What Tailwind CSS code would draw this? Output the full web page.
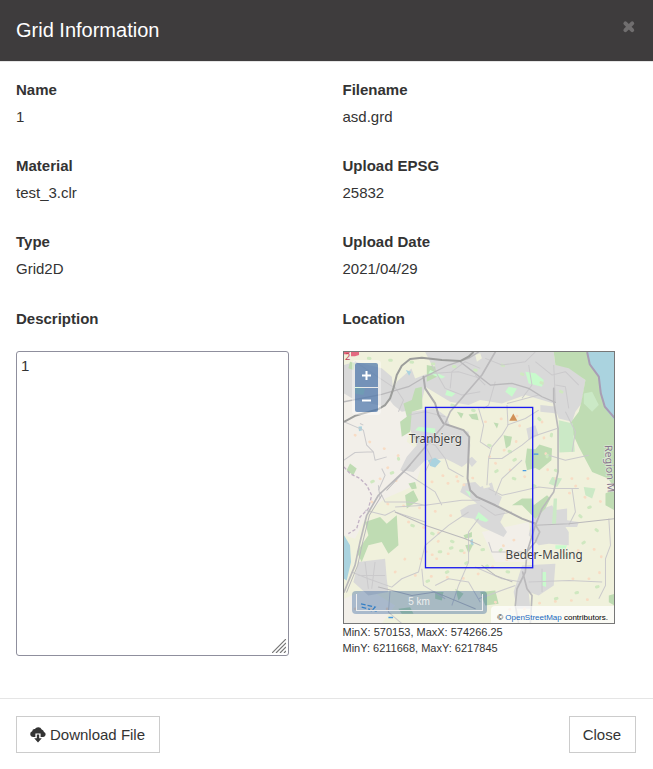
<!DOCTYPE html>
<html lang="en">
<head>
  <meta charset="UTF-8" />
  <meta name="viewport" content="width=device-width, initial-scale=1.0" />
  <title>Grid Information</title>
  <script src="https://cdn.jsdelivr.net/npm/@tailwindcss/browser@4"></script>
</head>
<body class="bg-white text-[#333] text-[15px] leading-[22px] font-['Liberation_Sans',Arial,sans-serif]">

  <!-- Header -->
  <header class="flex items-start justify-between bg-[#3e3c3d] border-b border-[#e5e5e5] px-4 pt-4 pb-[17px]">
    <h1 class="text-white text-xl leading-7">Grid Information</h1>
    <button type="button" aria-label="Close dialog" class="mt-[3px] text-[#706e6f]">
      <svg class="size-4" viewBox="0 0 16 16" fill="none" stroke="currentColor" stroke-width="4" stroke-linecap="round"><path d="M4.4 4.4l6.8 6.8M11.2 4.4l-6.8 6.8" /></svg>
    </button>
  </header>

  <!-- Body -->
  <main class="grid grid-cols-2 gap-y-[27px] pt-[17px] pb-[42px]">
    <div class="px-4">
      <h2 class="font-bold mb-[5px]">Name</h2>
      <p>1</p>
    </div>
    <div class="px-4">
      <h2 class="font-bold mb-[5px]">Filename</h2>
      <p>asd.grd</p>
    </div>
    <div class="px-4">
      <h2 class="font-bold mb-[5px]">Material</h2>
      <p>test_3.clr</p>
    </div>
    <div class="px-4">
      <h2 class="font-bold mb-[5px]">Upload EPSG</h2>
      <p>25832</p>
    </div>
    <div class="px-4">
      <h2 class="font-bold mb-[5px]">Type</h2>
      <p>Grid2D</p>
    </div>
    <div class="px-4">
      <h2 class="font-bold mb-[5px]">Upload Date</h2>
      <p>2021/04/29</p>
    </div>
    <div class="pt-px pl-4 pr-[38px]">
      <label for="description" class="block font-bold mb-[21px]">Description</label>
      <div class="relative">
        <textarea id="description" class="block w-full h-[305px] resize-none rounded-[3px] border border-[#8f8f9d] bg-white px-1 py-[3px]">1</textarea>
        <svg class="pointer-events-none absolute bottom-[3px] right-[3px] size-[14px]" viewBox="0 0 14 14" stroke="#777" stroke-width="1.2"><path d="M0 14L14 0M4 14L14 4M8 14L14 8M12 14L14 12" /></svg>
      </div>
    </div>
    <div class="pt-px pl-4 pr-[38px]">
      <h2 class="font-bold mb-[21px]">Location</h2>

      <!-- Map -->
      <div class="relative aspect-square overflow-hidden border border-[#777]">
        <svg class="block size-full" viewBox="27 21 810 810" preserveAspectRatio="xMidYMid slice" role="img" aria-label="Map of Tranbjerg and Beder-Malling">
          <rect x="27" y="21" width="810" height="813" fill="#f0f1dc" />
          <path fill="#f2efe9" d="M27 120L180 130 235 205 215 290 270 330 240 420 150 460 100 500 60 580 27 570ZM440 560L580 530 590 650 480 650ZM27 760L100 730 180 780 140 834 27 834Z" />

          <!-- Towns -->
          <g fill="#d9d9d9">
            <path d="M27 60L60 50 140 70 170 95 175 140 150 185 60 165 27 145Z" />
            <path d="M270 21H655L660 60 700 65 750 105 738 175 720 200 710 230 670 220 655 175 620 165 570 150 500 175 435 165 400 180 345 170 320 155 270 125 255 190 200 200 175 180 160 160 185 110 230 70 290 60Z" />
            <path d="M225 200L300 190 335 215 345 245 400 260 405 300 400 350 380 365 350 350 330 340 270 345 235 380 195 375 215 335 245 300 215 230Z" />
            <path d="M375 440L385 415 420 410 435 425 470 412 478 440 500 455 490 480 510 500 495 530 515 560 505 575 440 545 415 520 380 515 375 495 400 480 425 475 400 455Z" />
            <path d="M70 650L150 640 155 700 160 740 100 750 55 710Z" />
            <path d="M595 500L650 480 680 530 700 560 700 600 640 595 610 600 580 570ZM655 495L695 490 695 525 730 530 725 545 660 545Z" />
            <path d="M560 660L660 655 655 720 610 750 580 740 585 790 545 790 535 740Z" />
            <path d="M573 250L600 240 610 270 580 285ZM615 180L665 185 665 205 615 200ZM395 345L410 335 425 350 410 365Z" />
          </g>
          <path fill="#f0f1dc" d="M285 175L300 160 330 175 320 200 300 195ZM440 410L455 405 465 425 445 430ZM420 30L435 25 440 40 425 50ZM225 60L260 45 300 60 280 85 240 100Z" />

          <!-- Woods and parks -->
          <g fill="#bfdcb3">
            <path d="M655 21H755L800 110 812 190 837 215V430L818 400 770 380 730 305 700 240 730 200 738 170 750 105 700 70 660 60Z" />
            <path d="M205 175L230 165 240 130 260 125 262 190 230 200 225 260 200 275 195 230 215 215Z" />
            <path d="M575 310L600 312 612 298 650 310 648 345 612 375 600 368 575 375 570 350Z" />
            <path d="M90 530L135 515 155 535 185 510 190 600 160 625 140 590 100 600 80 650 65 620 100 570Z" />
            <path d="M210 450L235 435 250 465 215 490ZM560 460L590 460 595 480 635 450 645 460 630 490 600 520 560 480 530 480Z" />
            <path d="M810 445L837 430 837 495 810 480ZM435 740L480 735 490 775 450 780ZM820 750L837 745V780L820 770Z" />
            <path d="M45 355L65 370 55 390 35 375ZM220 415L240 410 245 430 230 432ZM190 790L225 785 235 805 200 805Z" />
            <path d="M505 270L530 275 525 300 512 310ZM365 200L385 205 378 220ZM400 208L425 205 430 225 410 222ZM300 740L325 740 320 765 300 760ZM360 730L385 745 370 765Z" />
            <path d="M275 60L300 65 305 95 275 110ZM45 50L60 55 55 75 40 70ZM385 570L410 560 410 575 390 580ZM390 600L415 595 400 625ZM475 232L490 235 485 250Z" />
          </g>
          <g fill="#cbe9c6">
            <path d="M670 225L712 235 718 320 672 322Z" />
            <path d="M745 145L770 140 790 180 770 200 745 175ZM650 395L680 400 665 425 640 415ZM745 425L780 430 770 460 750 450ZM655 460L665 460 662 535 650 535Z" />
          </g>
          <g fill="#c8facc">
            <path d="M570 80L600 85 625 105 620 125 580 115ZM520 125L545 130 530 155 510 140ZM285 75L330 95 320 100 280 85ZM250 245L300 250 300 265 240 255ZM335 135L360 145 350 155 330 150ZM430 500L460 525 452 530 420 520ZM390 435L405 440 405 455ZM60 125L90 130 85 150 60 145ZM620 680L632 680 632 725 620 720ZM660 600L695 600 690 612 660 610Z" />
          </g>

          <!-- Water -->
          <path fill="#aad3df" d="M755 21H837V225L812 195 795 130 790 95 760 55ZM27 570L45 600 48 650 35 705 27 700ZM278 345L300 338 317 348 300 367 285 362ZM212 75L228 80 222 92ZM70 245L80 243 82 255 72 258ZM405 585L412 580 415 600 407 597Z" />
          <path fill="none" stroke="#a89db5" stroke-width="6" d="M755 21L763 58 790 95 796 145 808 185 837 218" />
          <path fill="none" stroke="#4a9ce0" stroke-width="4" stroke-dasharray="14 6" d="M78 775L120 785 108 798M80 785L125 797M160 816H180M595 327H612M562 376H573" />

          <!-- Farms and small features -->
          <g fill="none" stroke="#f8dcc4" stroke-width="8" stroke-linecap="round" stroke-dasharray="1 47">
            <path d="M60 270L190 330 130 400 215 410M290 410L400 420 320 390 430 400M450 230L560 210 540 300 450 340 580 400" />
            <path d="M620 230L640 400 760 400 690 440 800 470M680 620L800 610 790 700 700 700M110 470L270 490 380 520M220 530L330 570 260 630 420 620" />
            <path d="M240 690L400 700 520 640 500 590 560 580M480 770L540 800 620 770 800 760M180 680L210 640 350 640M60 790L170 790" />
          </g>
          <g fill="none" stroke="#cfe8c0" stroke-width="9" stroke-linecap="round" stroke-dasharray="5 59">
            <path d="M350 180L430 200M460 300L560 330 480 380 620 430M610 220L650 260 630 360 690 390M110 410L200 370 190 340" />
            <path d="M230 540L380 600 300 620 500 610 440 680M690 630L790 560 720 500 780 480M520 680L400 650 250 720M660 760L800 720M100 40L330 60 450 80M500 60L700 150" />
          </g>

          <!-- Minor roads -->
          <g fill="none" stroke="#cbcacc" stroke-width="3" stroke-linejoin="round">
            <path d="M27 230L85 255 95 300 115 320 120 345 155 335M27 345L60 322 115 320M85 240L75 235M130 435L150 390 140 370M175 120L205 165 190 200M60 50L180 130" />
            <path d="M265 95L300 85 370 80 435 100M290 60L330 130 380 150 435 140M345 130L350 80 390 50 435 70M220 210L270 200 330 215M230 270L300 300 330 340 340 370 385 395M270 300L290 340 270 380" />
            <path d="M420 90L450 120M450 40L500 60 570 50 600 21M580 60L590 120 560 160M600 50L650 90 690 80 730 120M660 120L690 125 700 190M480 110L460 180 445 190M655 60L660 170" />
            <path d="M430 190L445 240 435 290 465 310M515 180L518 240 500 270 470 305 460 340 455 420M460 340H500L560 300 590 275 665 250M515 240L570 220 610 195M515 175L610 150" />
            <path d="M460 430L500 450 610 425 650 430 730 430M480 450L500 400 560 345M690 200L720 260 710 320M640 330L690 345 760 330" />
            <path d="M180 495L150 510 90 495M135 440L150 470 220 470 270 480M130 420L135 460M180 500L270 530M180 485L270 480 380 465 435 465M200 375L300 440 320 480" />
            <path d="M50 680L100 700 170 725 200 700 250 680 260 640 270 600 340 540 400 500M165 735L160 800 200 834M260 670L265 720 330 760M300 720L340 700 400 710 435 770M350 780L370 720 400 650 400 560 430 520" />
            <path d="M420 665L500 700 560 710M430 760L540 720M580 710L700 705 800 710M820 520L825 600 810 640 810 720 790 760M700 540L720 500 710 430M460 590L470 620 560 620" />
            <path d="M90 650L100 730M120 650L110 730M70 690L150 690M620 670V740M435 480L480 510 530 500" />
          </g>

          <!-- Main roads -->
          <g fill="none" stroke="#bab9bb" stroke-width="5" stroke-linejoin="round" stroke-linecap="round">
            <path d="M27 170L140 148 220 125 270 95 340 60 400 40 430 21" stroke-width="4" />
            <path d="M265 95L270 130 300 175 310 210 325 235 385 255 402 275 397 400 405 435 425 455 480 480 560 520 600 535" stroke="#acabad" stroke-width="6" />
            <path d="M27 740L60 660 75 590 95 510 130 450 215 370 330 235 345 200 440 90 480 21" />
            <path d="M155 435L225 360M35 740L68 660 83 590 103 510 140 450" stroke-width="3" />
            <path d="M375 50L420 85 465 120 530 115 580 130 620 155 660 172" stroke-width="4" />
            <path d="M655 130L655 170 668 250 668 380 655 440 620 490 600 540 575 620 570 680 545 730 540 780 550 834" />
            <path d="M562 680L575 730 590 750 585 834M598 535L613 560 600 590 578 615" />
            <path d="M600 540L700 535 837 520M180 500L270 540 390 580 435 600M440 660L480 690 530 709M130 725L230 750 300 740 420 790" stroke-width="3" />
          </g>

          <!-- Motorway -->
          <path fill="none" stroke="#9c9d9b" stroke-width="6" stroke-linejoin="round" d="M27 230L60 212 130 192 150 180 165 160 175 130 185 90 200 62 225 42 260 38 320 45 375 48 400 35 415 21" />
          <path fill="none" stroke="#c3b3c5" stroke-width="4" stroke-dasharray="10 6" d="M27 365L45 385 75 400 95 420 110 450 100 490 75 515 65 550 40 565" />
          <path fill="#e46a80" d="M48 21H72V30L60 34H48ZM27 21H45L40 28H27Z" />
          <text x="30" y="46" font-family="Noto Sans, sans-serif" font-size="28" fill="#bf4059">2</text>
          <path fill="#d08f55" d="M534 205L546 227H522Z" />

          <!-- Place names -->
          <g font-family="Noto Sans, sans-serif" font-size="35" fill="#444" stroke="#f5f5ee" stroke-opacity="0.6" stroke-width="4" paint-order="stroke">
            <text x="222" y="293">Tranbjerg</text>
            <text x="511" y="641">Beder-Malling</text>
            <text transform="translate(807 300) rotate(86)" fill="#86768c" font-size="32">Region M</text>
          </g>

          <!-- Grid extent -->
          <rect x="271" y="187" width="321" height="480" fill="none" stroke="#1a1aef" stroke-width="4" />
        </svg>

        <!-- Zoom control -->
        <div class="absolute left-2 top-2 flex flex-col gap-px rounded bg-white/40 p-[3px] text-white">
          <button type="button" aria-label="Zoom in" class="flex h-6 w-[23px] items-center justify-center rounded-t-xs bg-[#003c88]/50">
            <svg class="size-[9px]" viewBox="0 0 9 9" stroke="currentColor" stroke-width="2"><path d="M0 4.5h9M4.5 0v9" /></svg>
          </button>
          <button type="button" aria-label="Zoom out" class="flex h-6 w-[23px] items-center justify-center rounded-b-xs bg-[#003c88]/50">
            <svg class="size-[9px]" viewBox="0 0 9 9" stroke="currentColor" stroke-width="2"><path d="M0 4.5h9" /></svg>
          </button>
        </div>

        <!-- Scale line -->
        <div class="absolute bottom-[9px] left-2 rounded bg-[#003c88]/30 px-1 py-[3px]">
          <div class="h-[17px] w-[127px] border border-t-0 border-[#eee] text-center text-[10px] leading-4 text-[#eee]">5 km</div>
        </div>

        <div class="absolute bottom-0 right-0 rounded-tl bg-white/70 px-1.5 pt-[7px] text-[8px] leading-[10px] text-black">
          © <a href="https://www.openstreetmap.org/copyright" class="text-[#1a6ac0]">OpenStreetMap</a> contributors.
        </div>
      </div>

      <p class="text-[11px] leading-4">MinX: 570153, MaxX: 574266.25<br />MinY: 6211668, MaxY: 6217845</p>
    </div>
  </main>

  <!-- Footer -->
  <footer class="flex items-center justify-between border-t border-[#e5e5e5] pl-4 pr-[17px] py-[17px]">
    <button type="button" class="flex h-[37px] items-center gap-1 border border-[#ccc] bg-white pl-[13px] pr-3.5">
      <svg class="size-4" viewBox="0 0 16 16" fill="currentColor">
        <path d="M3.4 10A3.2 3.2 0 0 1 0.2 7 2.9 2.9 0 0 1 2.2 4.2 2.5 2.5 0 0 1 4.9 2 3.9 3.9 0 0 1 11.7 2.4 3.3 3.3 0 0 1 14 5 2.6 2.6 0 0 1 13.3 10H10.6V6.6H5.4V10Z" />
        <path d="M6.8 7.6H9.2V11.2H11.8L8 15.4 4.2 11.2H6.8Z" />
      </svg>
      Download File
    </button>
    <button type="button" class="h-[37px] border border-[#ccc] bg-white pl-[13px] pr-3.5">Close</button>
  </footer>

</body>
</html>
